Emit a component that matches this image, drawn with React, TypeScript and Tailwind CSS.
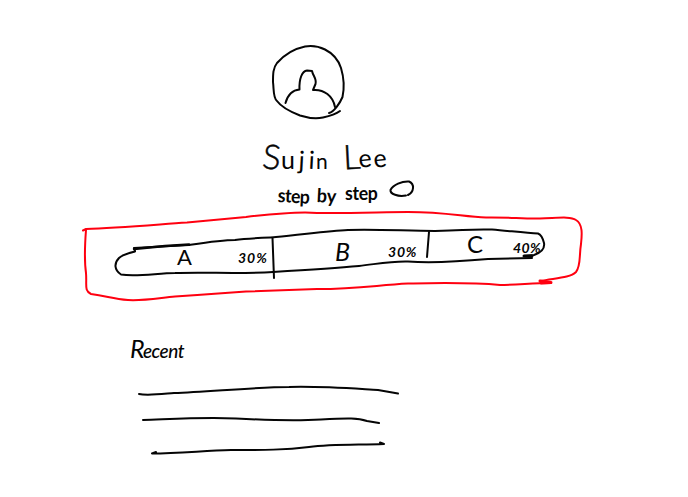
import type { ReactNode } from "react";

type GlyphProps = { children: ReactNode; className?: string };

const Glyph = ({ children, className = "" }: GlyphProps) => (
  <span className={`inline-block origin-bottom ${className}`}>{children}</span>
);

const Avatar = () => (
  <svg className="block h-[84px] w-20" viewBox="268 40 80 84" fill="none" stroke="currentColor" strokeWidth="2" strokeLinecap="round" strokeLinejoin="round">
    <path d="M329 113 C334 112 340 103 342.5 97 C344 90 344 78 341 68 C338 59 332 53 325 49.5 C318 46 311 45.5 305 46.5 C293 49 284 55 277 63 C273 68 273 74 273 82 C274 90 273 98 277 101 C282 108 291 112 300 115.5 C308 118 316 119 323 117.5 C330 116 336 114 340 111" />
    <path d="M285.5 103 C288 94 293 90 299.5 89.5 C299 79 302 71 307 70.5 L312 71 C313 76 317 79 315.5 84 L313 90 C324 89 333 96 335 107" />
  </svg>
);

const Outline = () => (
  <svg className="absolute inset-0 h-full w-full" viewBox="78 208 510 96" fill="none" strokeLinecap="round" strokeLinejoin="round">
    <g stroke="#ff0010" strokeWidth="2">
      <path d="M83 230.5 L86 229 C115 228 151 225 187 222.5 L246 217 C280 213 302 211.5 317 213 C350 213.5 385 212 408 212 C447 212 464 217 486 217.5 C506 217 525 219 540 218.5 C558 218 570 216 576 220 C583 224 582 235 581 244 C579 256 581 266 576 272 C570 278 555 278 540 281 L551 283 C533 283 517 285 500 285 C469 282 433 283 408 283.5 C377 285 359 289 317 289 L246 291.5 C226 293 199 295 175 296.5 C159 298 143 301 128 300 C113 299 107 296 91 294 C84 291 87 285 86 273 C84 259 85 243 86 230" />
      <path d="M540 281 L551 282.5 L541 283" strokeWidth="3" />
    </g>
    <g stroke="#050505" strokeWidth="2">
      <path d="M135 251.5 C129 253 122 255 119 258 C114 263 114 270 121 274.5 C137 277 158 273 175 273 C205 272 242 274 273 272 C306 270 337 268 359 266 C377 264 390 261 408 261.5 C430 263 466 261 488 259 L532 258" />
      <path d="M135 251 L134 248 C151 247 170 246 189 245 C209 242 222 240 235 240 C249 238 264 238 276 237 C300 235 327 231 348 230 C377 229 407 231 435 231 C454 230 474 229 492 229.5 C510 231 526 233 538 233.5 C542 235 543 239 544 243 C545 249 540 253 534 255 L524 256" />
      <path d="M134 249 L165 246 L189 244.5" strokeWidth="2.5" />
      <path d="M272.5 238 L274 278 M429 232 L427 257" />
      <path d="M524 256 L532 256" strokeWidth="3" />
    </g>
  </svg>
);

const RecentLines = () => (
  <svg className="ml-[136px] block h-[76px] w-[266px]" viewBox="136 382 266 76" fill="none" stroke="currentColor" strokeWidth="2" strokeLinecap="round" strokeLinejoin="round">
    <path d="M139 394 C147 396 162 394 174 393 C208 392 254 387 289 387 C321 386 359 389 378 390 L398 393.5" />
    <path d="M143 420 C173 419 204 417 236 418.5 C265 420 295 421 321 419.5 C349 418 358 418 367 421 L379 423" />
    <path d="M156 452 L152 453.5 C178 453 203 451 231 450 C264 450 285 450 309 447 C332 444 359 445 384 444 L380 442.5" />
  </svg>
);

export default function App() {
  return (
    <main className="h-[497px] w-[688px] overflow-hidden bg-white font-[Lato,sans-serif] text-[#050505]">
      <header className="h-[208px] pt-10">
        <div className="ml-[268px]">
          <Avatar />
        </div>
        <h1 className="mt-[15px] ml-[261px] h-[42px] text-[25px] leading-[34px] font-normal whitespace-nowrap">
          <Glyph className="w-[19px] rotate-6 text-[34px] leading-none font-light [-webkit-text-stroke:0.5px]">S</Glyph>
          <Glyph className="w-[16px] translate-x-px">u</Glyph>
          <Glyph className="w-[9px] translate-x-0.5 rotate-3">j</Glyph>
          <Glyph className="w-[9px] translate-x-[3px] rotate-3">i</Glyph>
          <Glyph className="mr-[17px] w-[14px] translate-x-0.5 text-[21px]">n</Glyph>
          <Glyph className="w-[15px] -translate-x-px -rotate-3 text-[34px] leading-none font-light [-webkit-text-stroke:0.5px]">L</Glyph>
          <Glyph className="w-[15px] -translate-y-0.5 -rotate-6">e</Glyph>
          <Glyph className="-translate-y-0.5 -rotate-6">e</Glyph>
        </h1>
        <div className="ml-[278px] flex h-[27px] items-start text-[19px] leading-[23px] font-bold">
          <p className="flex w-[110px] pt-0.5">
            <span className="w-[39px] origin-left scale-x-[0.93] rotate-3 tracking-[-0.6px]">step</span>
            <span className="w-[28px] origin-left scale-x-[0.95] rotate-3">by</span>
            <span className="w-[36px] origin-left -translate-y-0.5 scale-x-[0.93] tracking-[-0.3px]">step</span>
          </p>
          <svg className="mt-[-3px] h-[22px] w-7" viewBox="387 178 28 22" fill="none" stroke="currentColor" strokeWidth="2" strokeLinecap="round">
            <path d="M405 195.5 C397 197 389 194 389.5 190 C392 185 401 181 408 181.5 C414 184 413 192 407 195" />
          </svg>
        </div>
      </header>

      <section className="relative ml-[78px] h-24 w-[510px]">
        <Outline />
        <div className="relative ml-[37px] flex h-24 w-[429px]">
          <div className="flex w-[158px] items-start pl-[62px]">
            <span className="mt-[35px] w-[61px] text-[22px] leading-[28px]">A</span>
            <span className="mt-[40px] text-[14px] leading-[20px] font-bold tracking-[1px] italic">30%</span>
          </div>
          <div className="flex w-[155px] items-start pl-[62px]">
            <span className="mt-[27px] w-[53px] text-[25px] leading-[32px] italic">B</span>
            <span className="mt-[34px] text-[14px] leading-[20px] font-bold tracking-[0.8px] italic">30%</span>
          </div>
          <div className="flex w-[116px] items-start pl-[39px]">
            <span className="mt-[22px] w-[46px] text-[24px] leading-[28px]">C</span>
            <span className="mt-[30px] text-[14px] leading-[20px] font-bold tracking-[0.4px] italic">40%</span>
          </div>
        </div>
      </section>

      <section>
        <h2 className="ml-[130px] h-[78px] pt-[31px] text-[19px] leading-[32px] font-medium tracking-[-0.5px] italic">
          <Glyph className="w-[13px] text-[25px] leading-none font-normal">R</Glyph>ecent
        </h2>
        <RecentLines />
      </section>
    </main>
  );
}
